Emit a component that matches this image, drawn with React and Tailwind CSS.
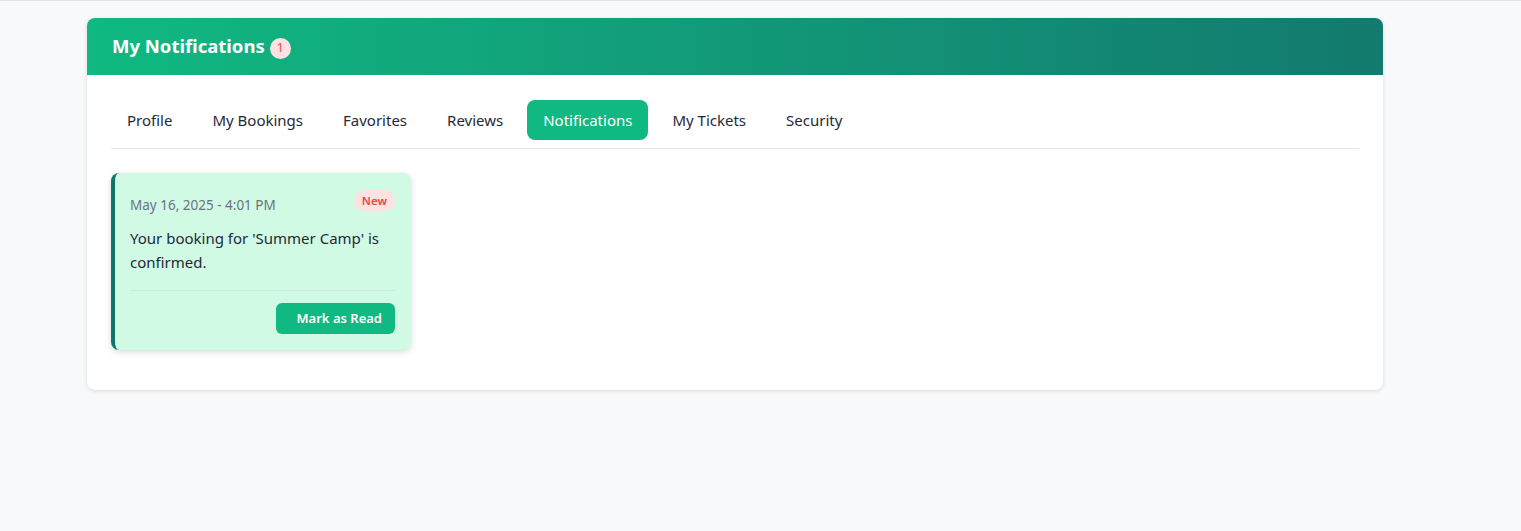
import React from "react"

const tabs = [
  "Profile",
  "My Bookings",
  "Favorites",
  "Reviews",
  "Notifications",
  "My Tickets",
  "Security",
]

function App() {
  const active = "Notifications"

  return (
    <div
      className="min-h-[531px] bg-[#f8f9fa] border-t border-[#dee2e6] pt-[17px]"
      style={{ fontFamily: '"Noto Sans", "Open Sans", sans-serif' }}
    >
      <div className="ml-[87px] w-[1296px] bg-white rounded-lg shadow-[0_1px_4px_rgba(0,0,0,0.12)] overflow-hidden">
        <div className="h-[57px] flex items-center px-[25px] bg-gradient-to-r from-[#10b981] to-[#137a6e]">
          <h2 className="text-[18.5px] font-bold text-white leading-none">My Notifications</h2>
          <span className="ml-[5px] mt-[3px] w-[21px] h-[21px] rounded-full bg-[#fee2e2] text-[#ef4444] text-[12px] flex items-center justify-center">
            1
          </span>
        </div>

        <div className="px-6 pt-[25px] pb-10">
          <div className="flex gap-2 pb-2 border-b border-[#e5e7eb]">
            {tabs.map((tab) => (
              <button
                key={tab}
                className={`h-10 px-4 rounded-lg text-[15px] ${
                  tab === active ? "bg-[#10b981] text-white" : "text-[#1f2937]"
                }`}
              >
                {tab}
              </button>
            ))}
          </div>

          <div className="mt-6 w-[300px] bg-[#d1fae5] border-l-[4px] border-[#0f766e] rounded-lg shadow-[0_2px_6px_rgba(0,0,0,0.15)] pl-[15px] pr-4 pt-4 pb-4">
            <div className="flex justify-between items-start">
              <span className="mt-[6px] text-[13.5px] text-[#6b7280]">May 16, 2025 - 4:01 PM</span>
              <span className="mt-[1px] px-2 py-[2px] rounded-full bg-[#fee2e2] text-[#ef4444] text-[11.5px] font-semibold">
                New
              </span>
            </div>
            <p className="mt-[11px] text-[15px] leading-6 text-[#1f2937]">
              Your booking for 'Summer Camp' is confirmed.
            </p>
            <div className="mt-[16px] pt-3 border-t border-[#cfe9de] flex justify-end">
              <button className="h-[31px] pl-[21px] pr-[13px] rounded-md bg-[#10b981] text-white text-[13px] font-semibold">
                Mark as Read
              </button>
            </div>
          </div>
        </div>
      </div>
    </div>
  )
}

export default App
